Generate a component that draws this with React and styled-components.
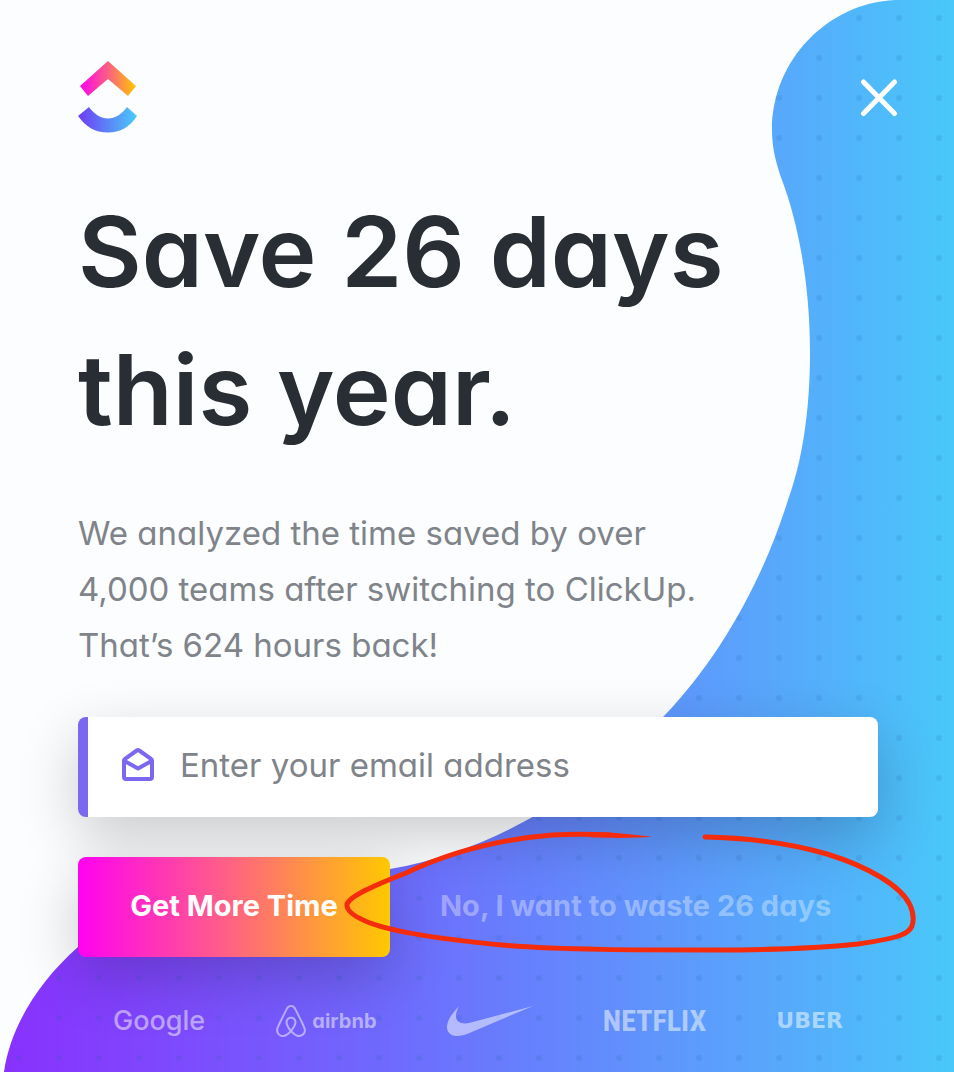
import React from "react";
import styled, { createGlobalStyle } from "styled-components";
import { SiAirbnb, SiNike } from "react-icons/si";

const GlobalStyle = createGlobalStyle`
  *, *::before, *::after { box-sizing: border-box; }
  body {
    margin: 0;
    background: #fbfdfe;
    font-family: Inter, Lato, "Liberation Sans", sans-serif;
    font-feature-settings: "cv11";
  }
`;

const Page = styled.main`
  position: relative;
  min-height: 100vh;
  overflow: hidden;
  background: #fbfdfe;
`;

const Backdrop = styled.svg`
  position: absolute;
  inset: 0;
  width: 100%;
  height: 100%;
`;

const Content = styled.div`
  position: relative;
  padding: 0 76px 24px 78px;
`;

const Header = styled.header`
  position: relative;
  display: flex;
  justify-content: space-between;
  align-items: flex-start;
  padding: 60px 56px 0 78px;
`;

const CloseButton = styled.button`
  display: flex;
  margin-top: 18px;
  padding: 0;
  border: 0;
  background: none;
  cursor: pointer;
`;

const Title = styled.h1`
  max-width: 680px;
  margin: 50px 0 0;
  font-size: 98px;
  line-height: 138px;
  font-weight: 600;
  color: #292d34;
`;

const Lead = styled.p`
  max-width: 640px;
  margin: 46px 0 44px;
  font-size: 33px;
  line-height: 56px;
  color: #7f838a;
`;

const Field = styled.label`
  display: flex;
  align-items: center;
  gap: 26px;
  height: 100px;
  padding: 0 34px 4px;
  border-left: 10px solid #7b68ee;
  border-radius: 8px;
  background: #fff;
  box-shadow: 0 20px 60px rgba(0, 0, 0, 0.2);
`;

const EmailInput = styled.input`
  flex: 1;
  min-width: 0;
  padding: 0;
  border: 0;
  outline: 0;
  background: transparent;
  font: inherit;
  font-size: 33px;
  color: #292d34;

  &::placeholder {
    color: #7f838a;
    opacity: 1;
  }
`;

const Actions = styled.div`
  position: relative;
  display: flex;
  align-items: center;
  gap: 50px;
  margin-top: 40px;
`;

const TextButton = styled.button`
  height: 100px;
  padding: 0 0 4px;
  border: 0;
  background: none;
  font: inherit;
  font-size: 29px;
  font-weight: 700;
  color: rgba(255, 255, 255, 0.36);
  cursor: pointer;
`;

const PrimaryButton = styled(TextButton)`
  width: 312px;
  border-radius: 8px;
  background: linear-gradient(90deg, #ff02f0 0%, #ff5b8c 45%, #ffc800 100%);
  box-shadow: 0 20px 60px rgba(0, 0, 0, 0.2);
  color: #fff;
`;

const Scribble = styled.svg`
  position: absolute;
  left: 262px;
  top: -27px;
  pointer-events: none;
`;

const Brands = styled.ul`
  display: flex;
  align-items: center;
  justify-content: space-between;
  height: 48px;
  margin: 40px 0 0;
  padding: 0 35px;
  list-style: none;
  color: rgba(255, 255, 255, 0.5);
`;

const Brand = styled.li`
  display: flex;
  align-items: center;
  gap: 5px;
  font-family: ${(p) => p.$font || "Inter"}, sans-serif;
  font-size: ${(p) => p.$size || 30}px;
  font-weight: ${(p) => p.$weight || 700};
  line-height: 40px;
`;

function Background() {
  return (
    <Backdrop viewBox="0 0 954 1072" preserveAspectRatio="xMaxYMin slice" aria-hidden="true">
      <defs>
        <linearGradient id="sky" gradientUnits="userSpaceOnUse" x1="0" y1="0" x2="954" y2="0">
          <stop offset="0" stopColor="#8930fd" />
          <stop offset="0.42" stopColor="#6e6cfd" />
          <stop offset="0.82" stopColor="#57a9fc" />
          <stop offset="1" stopColor="#49c8f9" />
        </linearGradient>
        <pattern id="dots" width="40" height="40" patternUnits="userSpaceOnUse">
          <circle cx="19" cy="18" r="3" fill="#1c5fae" fillOpacity="0.14" />
        </pattern>
        <path
          id="wave"
          d="M895 0C828 3 772 60 772 130C772 150 777 166 782 180C800 228 810 290 810 352C810 412 802 462 788 500C762 583 718 660 664 716C622 758 578 793 527 820C485 843 440 860 390 869C270 890 160 880 78 947C35 985 10 1030 4 1072H954V0Z"
        />
      </defs>
      <use href="#wave" fill="url(#sky)" />
      <use href="#wave" fill="url(#dots)" />
    </Backdrop>
  );
}

function Logo() {
  return (
    <svg width="60" height="73" viewBox="0 0 60 73" role="img" aria-label="ClickUp">
      <defs>
        <linearGradient id="roof" x1="0" x2="1">
          <stop offset="0" stopColor="#ff02f0" />
          <stop offset="0.5" stopColor="#fb5f83" />
          <stop offset="1" stopColor="#ffc800" />
        </linearGradient>
        <linearGradient id="smile" x1="0" x2="1">
          <stop offset="0" stopColor="#6f3bf5" />
          <stop offset="1" stopColor="#49ccf9" />
        </linearGradient>
      </defs>
      <path fill="url(#roof)" d="M2 26L30 1L58 26L50 36L30 19L10 36Z" />
      <path
        fill="url(#smile)"
        d="M0 56L11 47C16 54 23 58.500 30 58.500C37 58.500 44 54 49 47L59 56C52 67 42 72.500 30 72.500C17 72.500 8 67 0 56Z"
      />
    </svg>
  );
}

function MailIcon() {
  return (
    <svg width="32" height="34" viewBox="0 0 32 34" fill="none" stroke="#7b68ee" strokeWidth="4" strokeLinejoin="round" aria-hidden="true">
      <path d="M2 12.500Q2 11.500 3 10.800L14.800 2.500Q16 1.700 17.200 2.500L29 10.800Q30 11.500 30 12.500V29Q30 31 28 31H4Q2 31 2 29Z" />
      <path d="M2.500 13L16 20.500L29.500 13" />
    </svg>
  );
}

export default function App() {
  return (
    <>
      <GlobalStyle />
      <Page>
        <Background />
        <Header>
          <Logo />
          <CloseButton type="button" aria-label="Close">
            <svg width="38" height="40" viewBox="0 0 38 40" stroke="#fff" strokeWidth="5" strokeLinecap="round">
              <path d="M3.500 4L34.500 35.500M34.500 4L3.500 35.500" />
            </svg>
          </CloseButton>
        </Header>
        <Content>
          <Title>Save 26 days this year.</Title>
          <Lead>
            We analyzed the time saved by over 4,000 teams after switching to ClickUp. That’s 624 hours back!
          </Lead>
          <Field>
            <MailIcon />
            <EmailInput type="email" placeholder="Enter your email address" aria-label="Enter your email address" />
          </Field>
          <Actions>
            <PrimaryButton type="button">Get More Time</PrimaryButton>
            <TextButton type="button">No, I want to waste 26 days</TextButton>
            <Scribble width="580" height="126" viewBox="340 830 580 126" fill="none" aria-hidden="true">
              <path
                stroke="#f42c0c"
                strokeWidth="5"
                strokeLinecap="round"
                strokeLinejoin="round"
                d="M705 837C751 838 790 843 827 854C869 867 901 886 910 905C914 914 914 920 912 926C909 934 899 938 858 944C820 948 760 950 713 950C640 950 560 950 502 945C460 941 400 934 370 923C352 916 346 910 347 904C350 896 375 885 406 873C440 857 490 840 552 835C570 834 590 834 610 835"
              />
              <path fill="#f42c0c" d="M590 832C615 832 635 835 652 836.500C635 838.500 610 838 590 837.300Z" />
            </Scribble>
          </Actions>
          <Brands>
            <Brand $weight={500} $size={27}>Google</Brand>
            <Brand $size={20} $weight={700}>
              <SiAirbnb size={32} aria-hidden="true" />
              airbnb
            </Brand>
            <Brand $size={86}>
              <SiNike role="img" aria-label="Nike" />
            </Brand>
            <Brand $font={'"Liberation Sans Narrow", "Roboto Condensed", "Liberation Sans"'} $size={30}>
              NETFLIX
            </Brand>
            <Brand $font={'"DejaVu Sans"'} $size={22}>
              UBER
            </Brand>
          </Brands>
        </Content>
      </Page>
    </>
  );
}
